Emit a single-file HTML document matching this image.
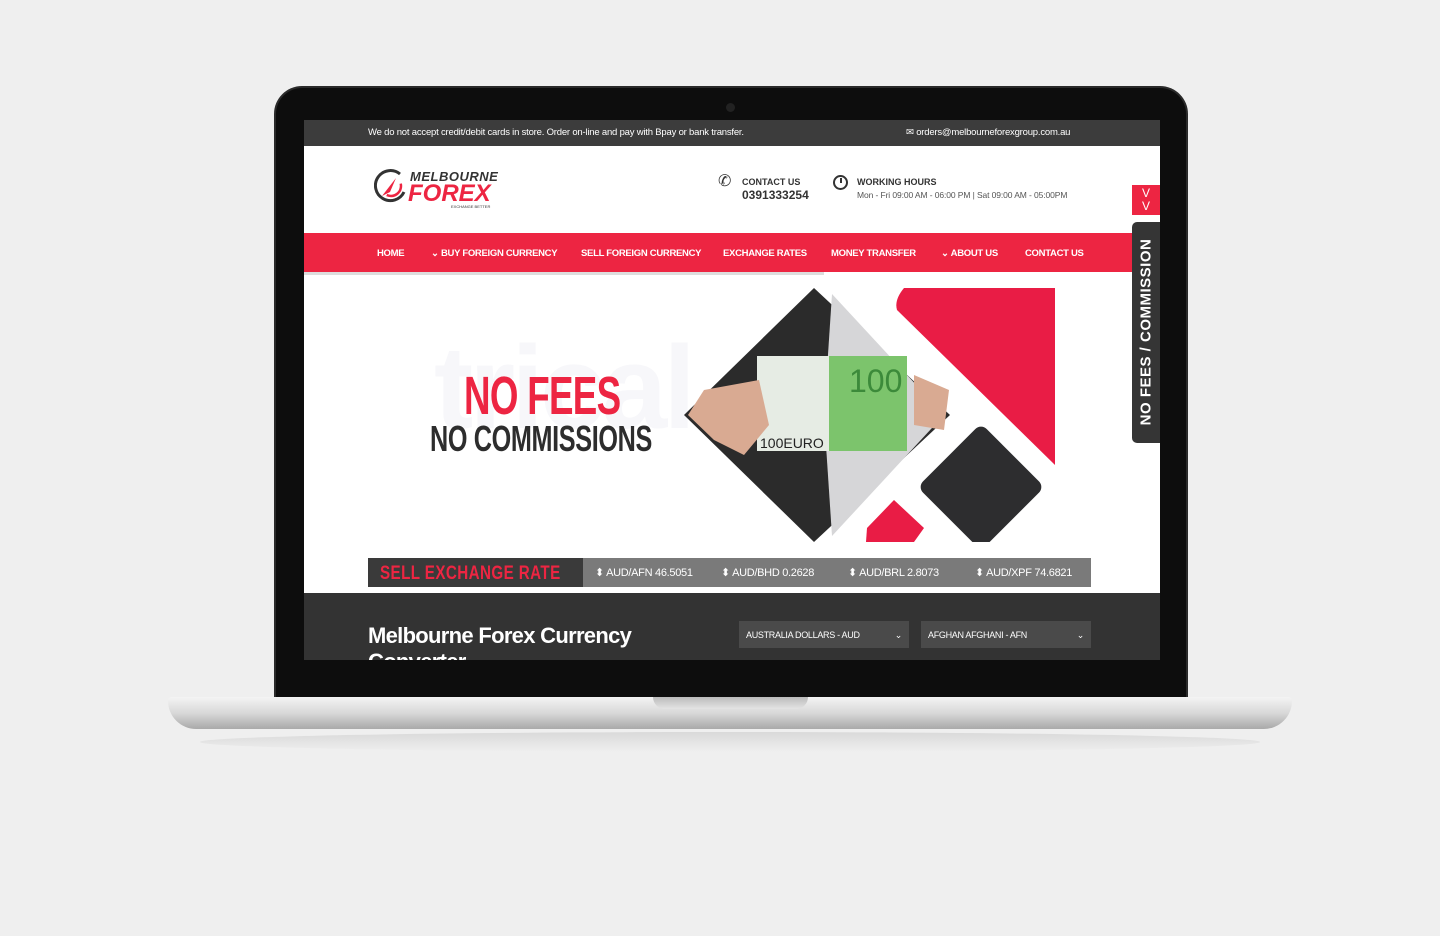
<!DOCTYPE html>
<html><head><meta charset="utf-8"><style>
*{margin:0;padding:0;box-sizing:border-box}
body{width:1440px;height:936px;background:#efefef;position:relative;overflow:hidden;font-family:"Liberation Sans",sans-serif}
.abs{position:absolute}
.bezel{left:276px;top:88px;width:910px;height:612px;background:#0d0d0d;border-radius:26px 26px 0 0;box-shadow:0 0 0 2px #2a2a2a}
.screen{left:304px;top:120px;width:856px;height:540px;background:#fff;overflow:hidden}
.top{left:0;top:0;width:856px;height:26px;background:#3c3c3c;color:#fff;font-size:9.5px;letter-spacing:-0.2px}
.nav{left:0;top:113px;width:856px;height:39px;background:#ed2542;color:#fff;font-size:9.5px;font-weight:bold;letter-spacing:-0.3px}
.nav span{position:absolute;top:15px}
.rate{left:64px;top:438px;width:723px;height:29px;background:#7a7a7a}
.dark{left:0;top:473px;width:856px;height:67px;background:#333}
.sel{height:27px;background:#4a4a4a;color:#fff;font-size:9px;padding:9px 7px;letter-spacing:-0.3px}
.r{position:absolute;top:8px;color:#fff;font-size:11px;white-space:nowrap;letter-spacing:-0.3px}
</style></head><body>
<div class="abs bezel"></div>
<div class="abs" style="left:726px;top:103px;width:9px;height:9px;border-radius:50%;background:#222"></div>
<div class="abs" style="left:168px;top:697px;width:1124px;height:32px;background:linear-gradient(#f4f4f4,#d8d8d8 50%,#a9a9a9);border-radius:4px 4px 30px 30px"></div>
<div class="abs" style="left:653px;top:697px;width:155px;height:12px;background:linear-gradient(#bbb,#e4e4e4);border-radius:0 0 14px 14px"></div>
<div class="abs" style="left:200px;top:732px;width:1060px;height:20px;background:linear-gradient(#d9d9d9,rgba(239,239,239,0));border-radius:50%"></div>
<div class="abs screen">
 <div class="abs top"><span class="abs" style="left:64px;top:7px">We do not accept credit/debit cards in store. Order on-line and pay with Bpay or bank transfer.</span><span class="abs" style="left:602px;top:7px">✉ orders@melbourneforexgroup.com.au</span></div>
 <svg class="abs" style="left:70px;top:48px" width="34" height="36" viewBox="0 0 34 36"><path d="M26 6A15 15 0 1 0 30 24" fill="none" stroke="#333" stroke-width="3"/><path d="M8 28L22 10L16 24Z" fill="#ed2542"/><circle cx="17" cy="18" r="10" fill="none" stroke="#ed2542" stroke-width="2.5" stroke-dasharray="20 40"/></svg>
 <div class="abs" style="left:106px;top:49px;font-size:13px;font-weight:bold;font-style:italic;color:#333;letter-spacing:0.5px">MELBOURNE</div>
 <div class="abs" style="left:104px;top:60px;font-size:24px;font-weight:bold;font-style:italic;color:#ed2542">FOREX</div>
 <div class="abs" style="left:147px;top:84px;font-size:4px;color:#333">EXCHANGE BETTER</div>
 <div class="abs" style="left:414px;top:51px;font-size:16px;color:#333">✆</div>
 <div class="abs" style="left:438px;top:57px;font-size:9px;font-weight:bold;color:#333">CONTACT US</div>
 <div class="abs" style="left:438px;top:68px;font-size:12px;font-weight:bold;color:#333">0391333254</div>
 <div class="abs" style="left:529px;top:55px;width:15px;height:15px;border:2px solid #333;border-radius:50%"></div>
 <div class="abs" style="left:536px;top:58px;width:1.5px;height:5px;background:#333"></div>
 <div class="abs" style="left:553px;top:57px;font-size:9px;font-weight:bold;color:#333">WORKING HOURS</div>
 <div class="abs" style="left:553px;top:70px;font-size:8.5px;color:#555;letter-spacing:-0.1px">Mon - Fri 09:00 AM - 06:00 PM | Sat 09:00 AM - 05:00PM</div>
 <div class="abs nav"><span style="left:73px">HOME</span><span style="left:127px">⌄ BUY FOREIGN CURRENCY</span><span style="left:277px">SELL FOREIGN CURRENCY</span><span style="left:419px">EXCHANGE RATES</span><span style="left:527px">MONEY TRANSFER</span><span style="left:637px">⌄ ABOUT US</span><span style="left:721px">CONTACT US</span></div>
 <div class="abs" style="left:0;top:152px;width:520px;height:3px;background:#ddd"></div>
 <div class="abs" style="left:130px;top:200px;font-size:118px;font-weight:bold;color:#f7f7fa;letter-spacing:-4px">trical</div>
 <div class="abs" style="left:160px;top:245px;font-size:54px;font-weight:bold;color:#ed2542;transform:scaleX(0.68);transform-origin:left;letter-spacing:-1px">NO FEES</div>
 <div class="abs" style="left:126px;top:298px;font-size:36px;font-weight:bold;color:#2d2d2d;transform:scaleX(0.7);transform-origin:left;letter-spacing:-0.5px">NO COMMISSIONS</div>
 <svg class="abs" style="left:370px;top:160px" width="400" height="264" viewBox="0 0 400 264">
  <path d="M223 30Q220 20 230 8L381 8L381 185Z" fill="#e91c45"/>
  <path d="M140 8L276 135L140 262L10 135Z" fill="#2b2b2b"/>
  <path d="M158 14L270 135L158 256L150 135Z" fill="#d6d6d8"/>
  <rect x="83" y="76" width="150" height="95" fill="#e6ece4"/>
  <rect x="155" y="76" width="78" height="95" fill="#7cc46c"/>
  <text x="175" y="112" font-size="32" fill="#3c8a3a" font-family="Liberation Sans">100</text>
  <text x="86" y="168" font-size="14" fill="#222" font-family="Liberation Sans">100EURO</text>
  <path d="M14 135L30 110L85 100L95 145L70 175L40 160Z" fill="#d9aa92"/>
  <path d="M240 95L275 110L270 150L240 145Z" fill="#d9aa92"/>
  <rect x="262" y="162" width="90" height="90" rx="8" transform="rotate(45 307 207) translate(-0 0)" fill="#2d2d2f"/>
  <path d="M220 220L250 248L240 262L192 262L193 248Z" fill="#e91c45"/>
  <rect x="0" y="262" width="400" height="10" fill="#fff"/>
 </svg>
 <div class="abs rate"><div class="abs" style="left:0;top:0;width:215px;height:29px;background:#3a3a3a"></div>
 <div class="abs" style="left:12px;top:5px;color:#ed2542;font-size:19px;font-weight:bold;white-space:nowrap;transform:scaleX(0.8);transform-origin:left;letter-spacing:0.5px">SELL EXCHANGE RATE</div>
 <div class="r" style="left:227px">⬍ AUD/AFN 46.5051</div>
 <div class="r" style="left:353px">⬍ AUD/BHD 0.2628</div>
 <div class="r" style="left:480px">⬍ AUD/BRL 2.8073</div>
 <div class="r" style="left:607px">⬍ AUD/XPF 74.6821</div></div>
 <div class="abs dark">
  <div class="abs" style="left:64px;top:30px;color:#fff;font-size:22px;font-weight:bold;letter-spacing:-0.7px;line-height:26px;width:320px">Melbourne Forex Currency Converter</div>
  <div class="abs sel" style="left:435px;top:28px;width:170px">AUSTRALIA DOLLARS - AUD<span style="float:right">⌄</span></div>
  <div class="abs sel" style="left:617px;top:28px;width:170px">AFGHAN AFGHANI - AFN<span style="float:right">⌄</span></div>
 </div>
</div>
<div class="abs" style="left:1132px;top:185px;width:28px;height:30px;background:#ed2542;color:#fff;font-size:12px;text-align:center;line-height:13px;padding-top:2px">V<br>V</div>
<div class="abs" style="left:1132px;top:222px;width:28px;height:221px;background:#353535;border-radius:5px 0 0 5px"></div>
<div class="abs" style="left:1146px;top:332px;transform:translate(-50%,-50%) rotate(-90deg);color:#fff;font-weight:bold;font-size:15px;white-space:nowrap;letter-spacing:0.5px">NO FEES / COMMISSION</div>
</body></html>
